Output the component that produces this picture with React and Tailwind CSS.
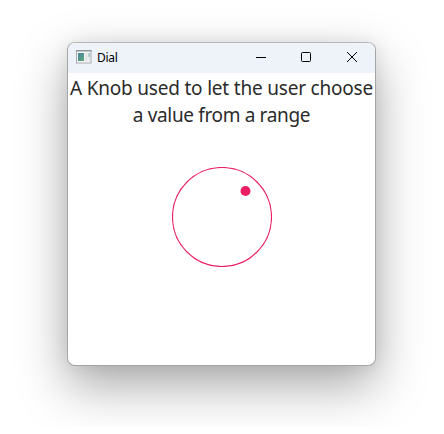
function AppIcon() {
  return (
    <svg className="block h-[14px] w-4" viewBox="0 0 16 14">
      <defs>
        <linearGradient id="pane" x1="0" y1="0" x2="0.6" y2="1">
          <stop offset="0" stopColor="#4c7fa6" />
          <stop offset="1" stopColor="#57a67c" />
        </linearGradient>
      </defs>
      <rect x="0.5" y="0.5" width="14.5" height="12.5" fill="#f4f4f5" stroke="#a9adb2" />
      <path d="M0 0.7H15.5" stroke="#8f969d" strokeWidth="1.4" />
      <rect x="2" y="3" width="6" height="8" fill="url(#pane)" />
      <rect x="9" y="3" width="2.5" height="8" fill="#e3e4e6" />
      <rect x="12.3" y="3" width="1.9" height="4" fill="#a9c9c2" />
      <rect x="12.3" y="7" width="1.9" height="4" fill="#e3e4e6" />
    </svg>
  );
}

function TitleBar() {
  return (
    <header className="flex h-[30px] items-start bg-[#eef3fa]">
      <div className="flex pt-[7px] pl-2">
        <AppIcon />
        <span className="ml-[5px] text-[12px] leading-4 tracking-[-0.3px] text-black">Dial</span>
      </div>
      <div className="ml-auto flex text-black">
        <svg className="h-[30px] w-[45px]" viewBox="0 0 45 30" fill="none" stroke="currentColor">
          <path d="M18 14.5H28" />
        </svg>
        <svg className="h-[30px] w-[45px]" viewBox="0 0 45 30" fill="none" stroke="currentColor">
          <rect x="18.5" y="9.5" width="9" height="9" rx="1" />
        </svg>
        <svg className="h-[30px] w-[47px]" viewBox="0 0 47 30" fill="none" stroke="currentColor">
          <path d="M19 9L29 19M29 9L19 19" strokeWidth="1" />
        </svg>
      </div>
    </header>
  );
}

function Dial() {
  return (
    <svg className="block size-[100px]" viewBox="0 0 100 100">
      <circle cx="50" cy="50" r="49.5" fill="none" stroke="#e91e63" strokeWidth="1.15" />
      <circle cx="73.5" cy="24" r="5" fill="#e91e63" />
    </svg>
  );
}

export default function App() {
  return (
    <div className="h-[434px] w-[444px] bg-white font-['Noto_Sans','Open_Sans',sans-serif]">
      <div className="h-[427px] overflow-hidden pt-[42px] pl-[67px]">
        <main className="h-[324px] w-[309px] overflow-hidden rounded-lg border border-[#a5a5a5] border-t-[#b8b8b8] bg-white shadow-[0_20px_50px_rgba(0,0,0,0.34),0_0_18px_rgba(0,0,0,0.08)]">
          <TitleBar />
          <div className="flex flex-col items-center pt-[2px]">
            <p className="text-center text-[19px] leading-[27px] whitespace-nowrap text-[#2b2b2b]">
              <span className="block tracking-[-0.2px]">A Knob used to let the user choose</span>
              <span className="block tracking-[-0.35px]">a value from a range</span>
            </p>
            <div className="pt-[38px]">
              <Dial />
            </div>
          </div>
        </main>
      </div>
    </div>
  );
}
